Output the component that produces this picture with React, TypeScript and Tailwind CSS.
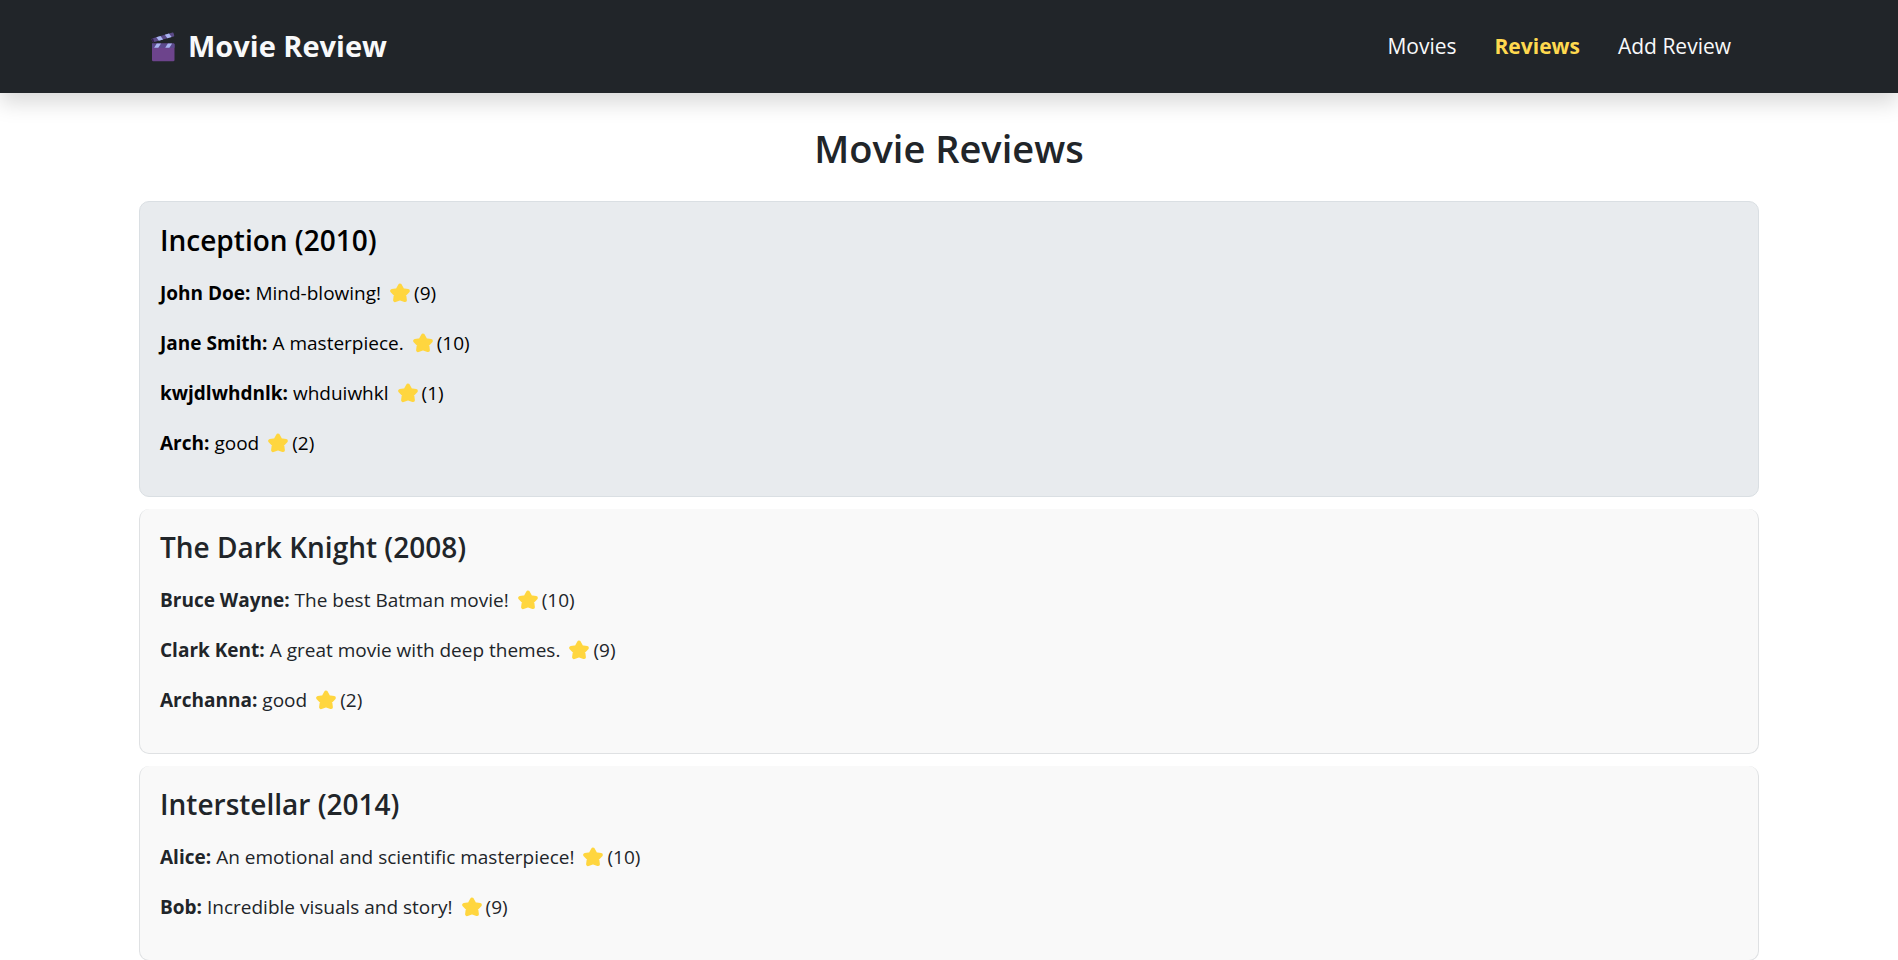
import React from "react";

type Review = { author: string; text: string; rating: number };
type Movie = { title: string; year: number; reviews: Review[] };

const movies: Movie[] = [
  {
    title: "Inception",
    year: 2010,
    reviews: [
      { author: "John Doe", text: "Mind-blowing!", rating: 9 },
      { author: "Jane Smith", text: "A masterpiece.", rating: 10 },
      { author: "kwjdlwhdnlk", text: "whduiwhkl", rating: 1 },
      { author: "Arch", text: "good", rating: 2 },
    ],
  },
  {
    title: "The Dark Knight",
    year: 2008,
    reviews: [
      { author: "Bruce Wayne", text: "The best Batman movie!", rating: 10 },
      { author: "Clark Kent", text: "A great movie with deep themes.", rating: 9 },
      { author: "Archanna", text: "good", rating: 2 },
    ],
  },
  {
    title: "Interstellar",
    year: 2014,
    reviews: [
      { author: "Alice", text: "An emotional and scientific masterpiece!", rating: 10 },
      { author: "Bob", text: "Incredible visuals and story!", rating: 9 },
    ],
  },
];

function Clapper() {
  return (
    <svg viewBox="0 1 26 32" className="h-8 w-[26px] shrink-0" aria-hidden="true">
      <path d="M2 9.5 22.600 3.600a.8.8 0 0 1 1 .6l.6 2.200a.8.8 0 0 1-.6 1L3.400 13.200a.8.8 0 0 1-1-.6L1.400 10.500Z" fill="#5a4a86" />
      <path d="M1.500 9.700 3 9.200 4.300 12.900 2.600 13.300Z" fill="#33204a" />
      <path d="m6.300 8.300 4.200-1.200 2.600 3.400-4.200 1.200ZM14.800 5.800 19 4.600l2.600 3.400-4.200 1.200Z" fill="#a9b4f0" />
      <path d="M2 14.600H23.600a.9.9 0 0 1 .9.900V31a1.300 1.300 0 0 1-1.300 1.300H3.300A1.300 1.300 0 0 1 2 31Z" fill="#6d448c" />
      <path d="M2 14.600H23.600a.9.9 0 0 1 .9.900V18.700H2Z" fill="#5b4a8c" />
      <path d="M6.800 14.600H11L8.300 18.700H4.100ZM17.900 14.600h4.200L19.400 18.700H15.200Z" fill="#a9b4f0" />
    </svg>
  );
}

function Star() {
  return (
    <svg viewBox="0 0 20 20" className="h-5 w-5 shrink-0" aria-hidden="true">
      <path
        d="M10 2.500 12.500 7 17.900 7.900 14.300 11.800 15 17.200 10 15.500 5 17.200 5.700 11.800 2.100 7.900 7.500 7Z"
        fill="#ffd63f"
        stroke="#ffd63f"
        strokeWidth="3.800"
        strokeLinejoin="round"
      />
    </svg>
  );
}

function MovieCard({ movie, active, first }: { movie: Movie; active: boolean; first: boolean }) {
  return (
    <li
      className={
        "rounded-[10px] border p-5 pb-[18px] " +
        (first ? "" : "border-t-0 ") +
        (active ? "border-[#dadfe3] bg-[#e8ebee] text-black" : "border-[#dfe1e3] bg-[#f9f9f9] text-[#212529]")
      }
    >
      <h2 className="mb-5 text-[28px] leading-9 font-semibold">
        {movie.title} ({movie.year})
      </h2>
      {movie.reviews.map((review) => (
        <p key={review.author} className="mb-5 flex items-center text-[19px] leading-[30px]">
          <strong className="mr-[5px] font-bold">{review.author}:</strong>
          <span className="mr-[9px]">{review.text}</span>
          <Star />
          <span className="ml-1">({review.rating})</span>
        </p>
      ))}
    </li>
  );
}

export default function App() {
  return (
    <div className="min-h-screen bg-white font-['Open_Sans','Noto_Sans',sans-serif] text-[#212529]">
      <header className="bg-[#212529] shadow-[0_10px_20px_rgba(0,0,0,0.15)]">
        <div className="mx-auto flex max-w-[1650px] items-center justify-between px-[26px] pt-[26px] pb-[27px]">
          <a href="#home" className="flex items-center gap-3 text-[29px] leading-10 font-bold text-[#f8f9fa]">
            <Clapper />
            Movie Review
          </a>
          <nav className="flex items-center gap-[38px] pr-[17px] text-[21px] leading-8 text-[#f8f9fa]">
            <a href="#movies">Movies</a>
            <a href="#reviews" className="font-bold text-[#ffd94f]" aria-current="page">Reviews</a>
            <a href="#add">Add Review</a>
          </nav>
        </div>
      </header>
      <main className="mx-auto max-w-[1650px] px-[15px] pt-[31px]">
        <h1 className="mb-[29px] text-center text-[38px] leading-[48px] font-semibold">Movie Reviews</h1>
        <ul className="flex flex-col gap-3">
          {movies.map((movie, i) => (
            <MovieCard key={movie.title} movie={movie} active={i === 0} first={i === 0} />
          ))}
        </ul>
      </main>
    </div>
  );
}
